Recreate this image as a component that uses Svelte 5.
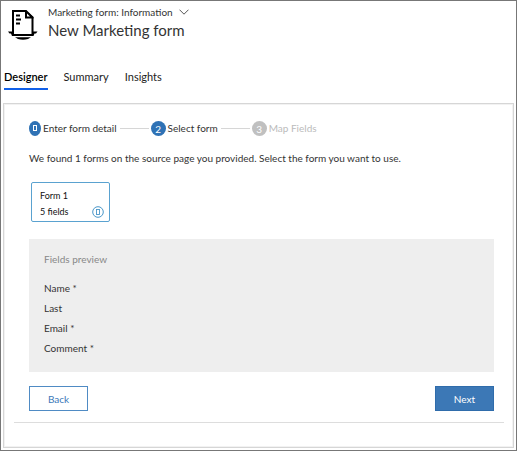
<script>
  let tab = $state('Designer');
  const tabs = ['Designer', 'Summary', 'Insights'];
  const fields = ['Name *', 'Last', 'Email *', 'Comment *'];
</script>

<div class="window">
  <header>
    <svg class="logo" width="32" height="32" viewBox="0 0 32 32" aria-hidden="true">
      <path d="M6 26V2H19L25.500 8.500V26" fill="none" stroke="#000" stroke-width="2" />
      <path d="M18 1V9.500H26.500V8Z" fill="#000" />
      <path d="M20 4.500V7.500H23Z" fill="#fff" />
      <path d="M9 6.500H13M9 10.500H14M9 14.500H13" stroke="#000" stroke-width="2" />
      <path d="M1 22.500H6V25H25.500V22.500H30.500L29 24.500H27.500L26.500 27H5L4 24.500H2.500Z" fill="#000" />
      <path d="M8 28.300H24L21 30Q16 31.500 11 30Z" fill="#000" />
    </svg>
    <div class="heading">
      <button class="switcher">
        Marketing form: Information
        <svg width="10" height="6" viewBox="0 0 10 6" aria-hidden="true">
          <path d="M.5 .7L5 5.200L9.500 .7" fill="none" stroke="#555" />
        </svg>
      </button>
      <h1>New Marketing form</h1>
    </div>
  </header>

  <nav>
    {#each tabs as name}
      <button class="tab" class:active={tab === name} onclick={() => (tab = name)}>{name}</button>
    {/each}
  </nav>

  <main>
    <ol class="steps">
      <li>
        <span class="dot narrow">
          <svg width="6" height="8" viewBox="0 0 6 8" aria-hidden="true">
            <rect x="1.500" y="1.500" width="3" height="5" fill="none" stroke="#fff" />
          </svg>
        </span>
        Enter form detail
      </li>
      <li><span class="dot">2</span>Select form</li>
      <li class="pending"><span class="dot">3</span>Map Fields</li>
    </ol>

    <p>We found 1 forms on the source page you provided. Select the form you want to use.</p>

    <button class="card">
      <span>Form 1</span>
      <span class="count">
        5 fields
        <svg width="12" height="12" viewBox="0 0 12 12" aria-hidden="true">
          <circle cx="6" cy="6" r="5.300" fill="none" stroke="#4a97c9" />
          <rect x="4.500" y="3.500" width="3" height="5" fill="none" stroke="#4a97c9" stroke-width=".9" />
        </svg>
      </span>
    </button>

    <section>
      <h2>Fields preview</h2>
      <ul>
        {#each fields as field}
          <li>{field}</li>
        {/each}
      </ul>
    </section>

    <div class="actions">
      <button>Back</button>
      <button class="primary">Next</button>
    </div>
    <hr />
  </main>
</div>

<style>
  .window {
    box-sizing: border-box;
    min-height: 100vh;
    padding: 3px 2px 2px;
    border: 1px solid #777;
    background: #fff;
    color: #333;
    font: 10px/16px Lato, 'Open Sans', sans-serif;
    display: flex;
    flex-direction: column;
  }
  button {
    margin: 0;
    padding: 0;
    border: 0;
    background: none;
    color: inherit;
    font: inherit;
    cursor: pointer;
  }
  header {
    display: flex;
    gap: 9px;
    padding: 0 4px;
  }
  .logo {
    margin-top: 5px;
  }
  .heading {
    display: flex;
    flex-direction: column;
    align-items: flex-start;
  }
  .switcher {
    display: flex;
    align-items: center;
    gap: 6px;
  }
  h1 {
    margin: 0;
    font-size: 15px;
    font-weight: 400;
    line-height: 20px;
  }
  nav {
    display: flex;
    gap: 16px;
    margin-top: 28px;
    padding: 0 1px;
  }
  .tab {
    padding-bottom: 3px;
    border-bottom: 2px solid transparent;
    color: #222;
    font-size: 11px;
  }
  .tab.active {
    border-color: #1160e8;
    color: #000;
    font-weight: 600;
  }
  main {
    flex: 1;
    margin-top: 13px;
    padding: 16px 19px 0 25px;
    border: 1px solid #d6d6d6;
    box-shadow: inset 0 0 0 1px #f2f2f2;
  }
  .steps {
    display: flex;
    align-items: center;
    margin: 0;
    padding: 0;
    list-style: none;
  }
  .steps li {
    display: flex;
    align-items: center;
    gap: 2px;
  }
  .steps li:not(:last-child)::after {
    content: '';
    width: 29px;
    margin: 0 2px 0 1px;
    border-top: 1px solid #d6d6d6;
  }
  .dot {
    display: grid;
    place-items: center;
    width: 15px;
    height: 15px;
    border-radius: 50%;
    background: #2f72b5;
    color: #fff;
  }
  .narrow {
    width: 12px;
  }
  .pending {
    color: #bbb;
  }
  .pending .dot {
    background: #c0c0c0;
  }
  p {
    margin: 14px 0 16px;
  }
  .card {
    display: flex;
    flex-direction: column;
    box-sizing: border-box;
    width: 79px;
    margin-left: 2px;
    padding: 5px 5px 1px 8px;
    border: 1px solid #5aa2d0;
    border-radius: 2px;
    color: #111;
    text-align: left;
    font-size: 9px;
  }
  .count {
    display: flex;
    align-items: center;
    justify-content: space-between;
  }
  section {
    margin-top: 17px;
    padding: 12px 15px 14px;
    background: #eee;
  }
  h2 {
    margin: 0 0 11px;
    color: #888;
    font-size: 10px;
    font-weight: 400;
  }
  ul {
    margin: 0;
    padding: 0;
    list-style: none;
    line-height: 20px;
  }
  .actions {
    display: flex;
    justify-content: space-between;
    margin-top: 14px;
  }
  .actions button {
    width: 59px;
    height: 25px;
    border: 1px solid #4f8bc4;
    color: #3a78b8;
  }
  .actions .primary {
    border-color: #2f6cab;
    background: #3c78b6;
    color: #fff;
  }
  hr {
    margin: 11px -10px 0 -15px;
    border: 0;
    border-top: 1px solid #ddd;
  }
</style>
